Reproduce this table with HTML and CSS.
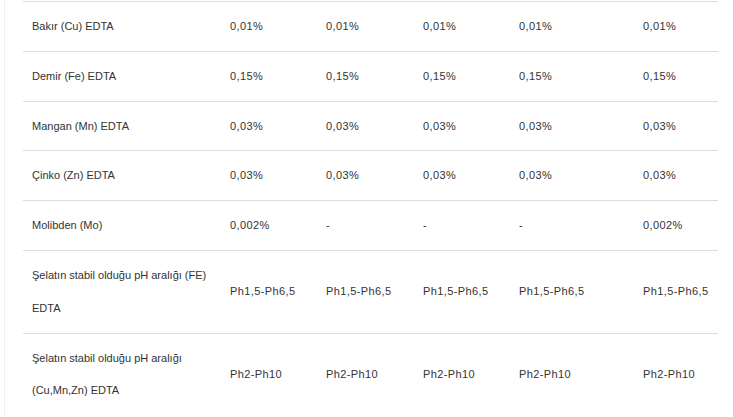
FILE: index.html
```html
<!DOCTYPE html>
<html lang="tr">
<head>
<meta charset="utf-8">
<link rel="stylesheet" href="styles.css">
</head>
<body>
<div class="wrap">
  <table class="spec">
    <colgroup>
      <col class="c1"><col class="c2"><col class="c3"><col class="c4"><col class="c5"><col class="c6">
    </colgroup>
    <tbody>
      <tr><td>Bakır (Cu) EDTA</td><td>0,01%</td><td>0,01%</td><td>0,01%</td><td>0,01%</td><td>0,01%</td></tr>
      <tr><td>Demir (Fe) EDTA</td><td>0,15%</td><td>0,15%</td><td>0,15%</td><td>0,15%</td><td>0,15%</td></tr>
      <tr><td>Mangan (Mn) EDTA</td><td>0,03%</td><td>0,03%</td><td>0,03%</td><td>0,03%</td><td>0,03%</td></tr>
      <tr><td>Çinko (Zn) EDTA</td><td>0,03%</td><td>0,03%</td><td>0,03%</td><td>0,03%</td><td>0,03%</td></tr>
      <tr><td>Molibden (Mo)</td><td>0,002%</td><td>-</td><td>-</td><td>-</td><td>0,002%</td></tr>
      <tr><td>Şelatın stabil olduğu pH aralığı (FE) EDTA</td><td>Ph1,5-Ph6,5</td><td>Ph1,5-Ph6,5</td><td>Ph1,5-Ph6,5</td><td>Ph1,5-Ph6,5</td><td>Ph1,5-Ph6,5</td></tr>
      <tr><td>Şelatın stabil olduğu pH aralığı (Cu,Mn,Zn) EDTA</td><td>Ph2-Ph10</td><td>Ph2-Ph10</td><td>Ph2-Ph10</td><td>Ph2-Ph10</td><td>Ph2-Ph10</td></tr>
    </tbody>
  </table>
</div>
</body>
</html>
```
FILE: styles.css
```css
html, body {
  margin: 0;
  padding: 0;
  background: #ffffff;
  height: 417px;
  overflow: hidden;
}
body {
  font-family: "Liberation Sans", Arial, sans-serif;
  color: #333333;
}
.wrap {
  margin-left: 4px;
  border-left: 1px solid #f0f0f0;
  padding: 1px 14px 0 18px;
  min-height: 417px;
  box-sizing: border-box;
}
.spec {
  width: 695px;
  border-collapse: collapse;
  table-layout: fixed;
  font-size: 11px;
}
.spec td {
  border-top: 1px solid #dddddd;
  padding: 8px 9px;
  line-height: 32.8px;
  vertical-align: middle;
  text-align: left;
  letter-spacing: 0.4px;
}
.spec td:first-child {
  letter-spacing: 0;
}
.c1 { width: 198px; }
.c2 { width: 96px; }
.c3 { width: 97px; }
.c4 { width: 96px; }
.c5 { width: 124px; }
.c6 { width: 84px; }
```
